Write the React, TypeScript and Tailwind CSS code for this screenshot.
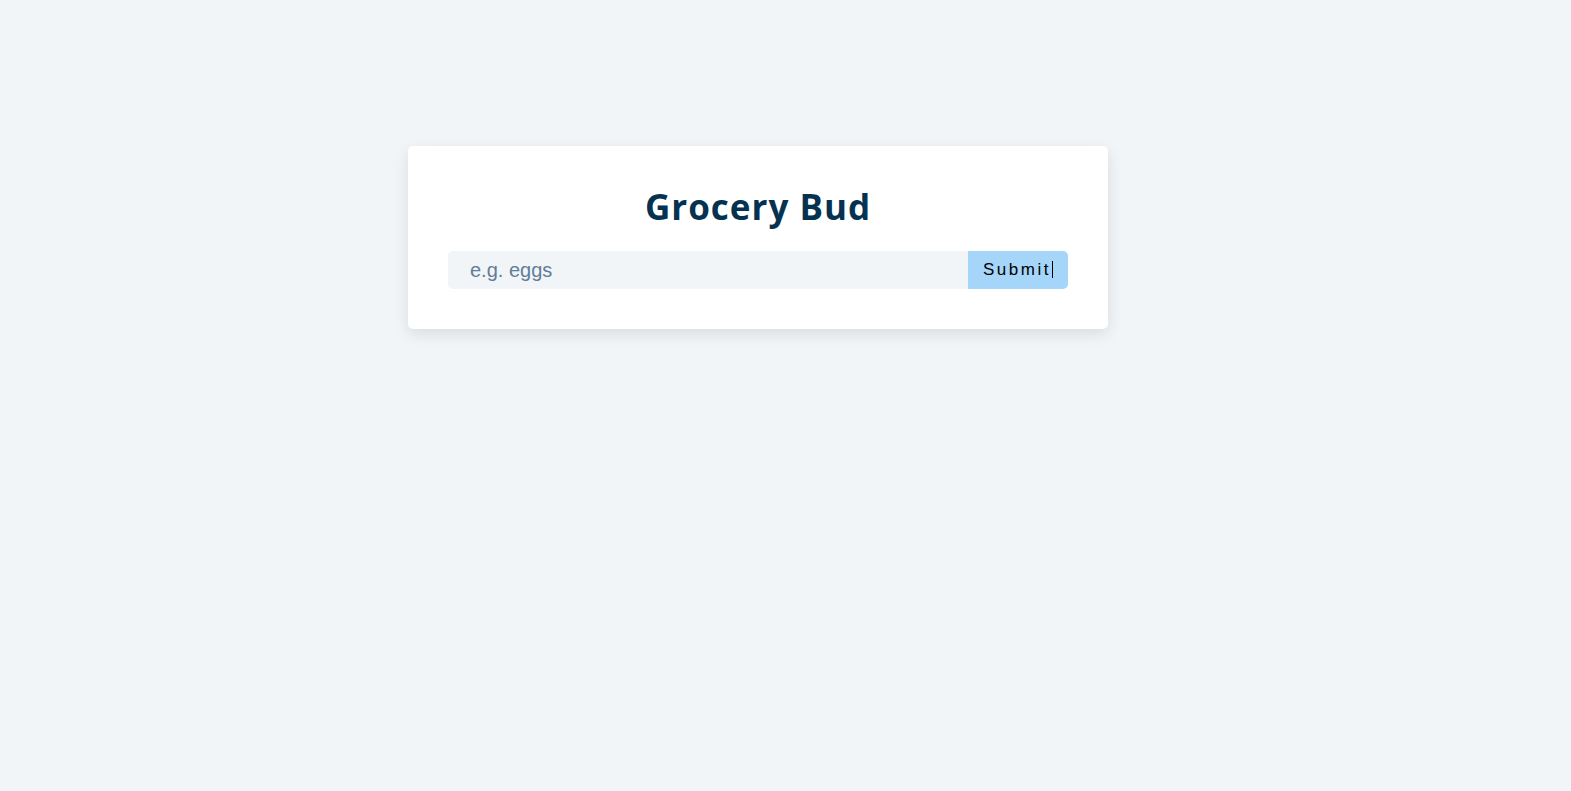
import React from "react";

export default function App() {
  return (
    <div className="min-h-screen w-full bg-[#f1f5f8] pt-[146px]" style={{ minHeight: 791 }}>
      <section className="ml-[408px] w-[700px] rounded-[5px] bg-white p-[40px] shadow-[0_5px_15px_rgba(0,0,0,0.1)]">
        <form className="flex flex-col" onSubmit={(e) => e.preventDefault()}>
          <h3 className="mb-[23px] text-center text-[35px] leading-[42px] font-bold tracking-[1px] text-[#063251] [font-family:'Open_Sans',sans-serif]">
            Grocery Bud
          </h3>
          <div className="flex h-[38px]">
            <input
              type="text"
              placeholder="e.g. eggs"
              className="h-full min-w-0 flex-1 rounded-l-[5px] bg-[#f1f5f8] pl-[22px] text-[20px] text-[#617d98] outline-none placeholder:text-[#617d98] [font-family:'Liberation_Sans',Arial,sans-serif]"
            />
            <button
              type="submit"
              className="relative h-full w-[100px] shrink-0 rounded-r-[5px] bg-[#a5d5f8] pr-[2px] text-[17px] tracking-[2.5px] text-black [font-family:'Liberation_Sans',Arial,sans-serif]"
            >
              Submit
              <span className="absolute left-[84px] top-[10px] h-[17px] w-px bg-black" />
            </button>
          </div>
        </form>
      </section>
    </div>
  );
}
